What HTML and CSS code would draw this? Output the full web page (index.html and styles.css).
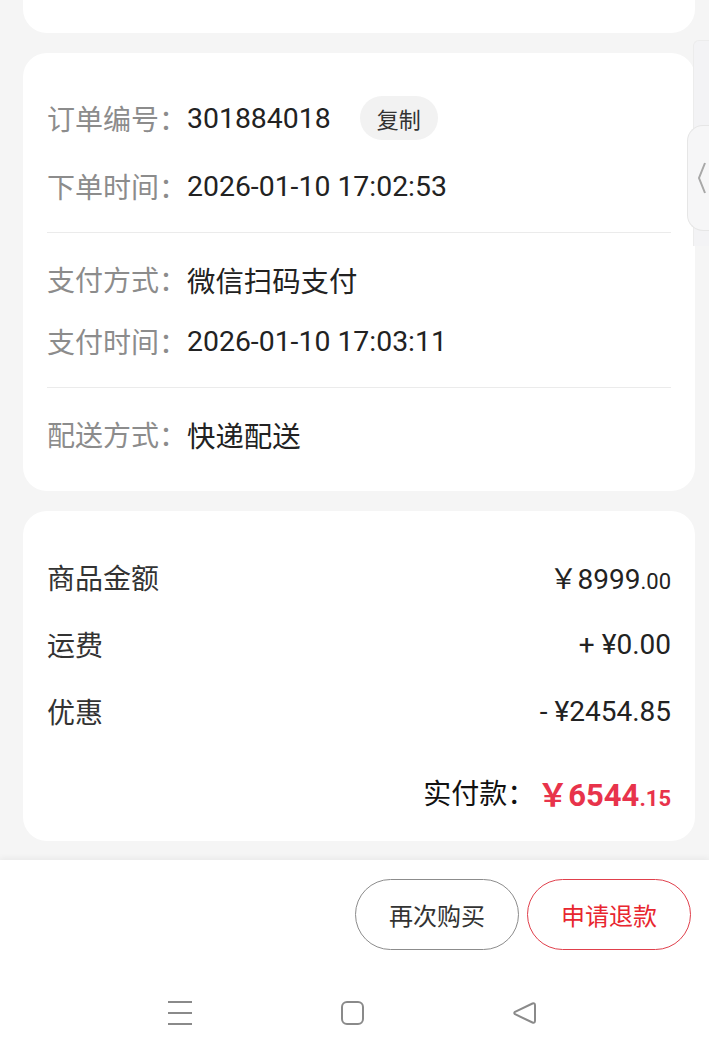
FILE: index.html
```html
<!DOCTYPE html>
<html lang="zh-CN">
<head>
  <meta charset="UTF-8" />
  <meta name="viewport" content="width=device-width, initial-scale=1.0" />
  <title>订单详情</title>
  <link rel="stylesheet" href="styles.css">
</head>
<body>
  <main class="page">
    <div class="card card-top"></div>

    <section class="card info-card">
      <div class="info-group">
        <div class="row row-order">
          <span class="label">订单编号：</span>
          <span class="value">301884018</span>
          <button class="copy-btn">复制</button>
        </div>
        <div class="row">
          <span class="label">下单时间：</span>
          <span class="value">2026-01-10 17:02:53</span>
        </div>
      </div>
      <div class="info-group">
        <div class="row">
          <span class="label">支付方式：</span>
          <span class="value">微信扫码支付</span>
        </div>
        <div class="row">
          <span class="label">支付时间：</span>
          <span class="value">2026-01-10 17:03:11</span>
        </div>
      </div>
      <div class="info-group">
        <div class="row">
          <span class="label">配送方式：</span>
          <span class="value">快递配送</span>
        </div>
      </div>
    </section>

    <section class="card summary-card">
      <div class="sum-row">
        <span class="sum-label">商品金额</span>
        <span class="sum-value"><span class="yen">￥</span>8999<small>.00</small></span>
      </div>
      <div class="sum-row">
        <span class="sum-label">运费</span>
        <span class="sum-value">+ ¥0.00</span>
      </div>
      <div class="sum-row">
        <span class="sum-label">优惠</span>
        <span class="sum-value">- ¥2454.85</span>
      </div>
      <div class="sum-row total-row">
        <span class="total-label">实付款：</span>
        <span class="total-value"><span class="yen">￥</span>6544<small>.15</small></span>
      </div>
    </section>
  </main>

  <footer class="bottom-bar">
    <div class="actions">
      <button class="btn">再次购买</button>
      <button class="btn btn-red">申请退款</button>
    </div>
    <nav class="sys-nav">
      <svg class="nav-icon" viewBox="0 0 24 24" width="24" height="24">
        <path d="M0 1h24M0 12h24M0 23h24" stroke="#8a8a8a" stroke-width="2" fill="none"/>
      </svg>
      <svg class="nav-icon" viewBox="0 0 24 24" width="24" height="24">
        <rect x="2" y="1" width="21" height="22" rx="5" stroke="#8a8a8a" stroke-width="2" fill="none"/>
      </svg>
      <svg class="nav-icon" viewBox="0 0 24 24" width="24" height="24">
        <path d="M20.5 2.5 Q23 1.5 23 4.5 V19.5 Q23 22.5 20.5 21.5 L3 13.2 Q1.5 12 3 10.8 Z" stroke="#8a8a8a" stroke-width="2" fill="none" stroke-linejoin="round"/>
      </svg>
    </nav>
  </footer>

  <div class="side-strip"></div>
  <div class="side-tab">
    <svg viewBox="0 0 10 32" width="10" height="32">
      <polyline points="8,1 2,16 8,31" stroke="#a8a8a8" stroke-width="2" fill="none"/>
    </svg>
  </div>
</body>
</html>
```

FILE: styles.css
```css
body {
  margin: 0;
  background: #f5f5f5;
  font-family: Roboto, "Noto Sans CJK SC", sans-serif;
  color: #222;
  position: relative;
  width: 709px;
  overflow: hidden;
}
.page {
  padding: 0 14px 19px 23px;
  display: flex;
  flex-direction: column;
  gap: 20px;
}
.card {
  background: #fff;
  border-radius: 24px;
}
.card-top {
  height: 33px;
  border-radius: 0 0 24px 24px;
}
.info-card {
  padding: 17px 24px 11px;
}
.info-group {
  padding: 26px 0;
  display: flex;
  flex-direction: column;
  gap: 22px;
}
.info-group + .info-group {
  border-top: 1px solid #ebebeb;
}
.row {
  display: flex;
  align-items: center;
  height: 40px;
  font-size: 28px;
}
.row-order {
  height: 44px;
  margin-bottom: 4px;
}
.label {
  color: #8c8c8c;
}
.value {
  color: #222;
  font-size: 28.4px;
}
.copy-btn {
  margin-left: 29px;
  height: 44px;
  padding: 0 17px;
  border: none;
  border-radius: 22px;
  background: #f2f2f2;
  color: #333;
  font-family: inherit;
  font-size: 22px;
}
.summary-card {
  padding: 46px 24px 29px;
  display: flex;
  flex-direction: column;
  gap: 27px;
}
.sum-row {
  display: flex;
  justify-content: space-between;
  align-items: center;
  height: 40px;
  font-size: 28px;
}
.sum-label {
  color: #333;
}
.sum-value {
  color: #222;
}
.sum-value small {
  font-size: 22px;
}
.total-row {
  justify-content: flex-end;
  margin-top: 14px;
}
.total-label {
  color: #111;
}
.total-value {
  color: #e8334b;
  font-weight: bold;
  font-size: 31px;
  margin-left: 2px;
}
.total-value small {
  font-size: 22px;
}
.yen {
  font-weight: normal;
}
.total-value .yen {
  font-weight: bold;
}
.bottom-bar {
  background: #fff;
  box-shadow: 0 -2px 6px rgba(0,0,0,0.05);
}
.actions {
  display: flex;
  justify-content: flex-end;
  gap: 8px;
  padding: 19px 18px 20px;
}
.btn {
  width: 164px;
  height: 71px;
  border: 1px solid #8c8c8c;
  border-radius: 36px;
  background: #fff;
  color: #333;
  font-family: inherit;
  font-size: 24px;
}
.btn-red {
  border-color: #e0404c;
  color: #e8262f;
}
.sys-nav {
  height: 86px;
  display: flex;
  justify-content: center;
  align-items: center;
  gap: 148px;
  padding-right: 5px;
}
.side-strip {
  position: absolute;
  top: 40px;
  right: 0;
  width: 15px;
  height: 205px;
  background: #f3f3f5;
  border-left: 1px solid #ececec;
  border-top: 1px solid #ececec;
  border-top-left-radius: 6px;
}
.side-tab {
  position: absolute;
  top: 125px;
  right: 0;
  width: 22px;
  height: 106px;
  background: #f6f6f7;
  border: 1px solid #e6e6e6;
  border-right: none;
  border-radius: 16px 0 0 16px;
  display: flex;
  align-items: center;
  padding-left: 9px;
  box-sizing: border-box;
}
```
